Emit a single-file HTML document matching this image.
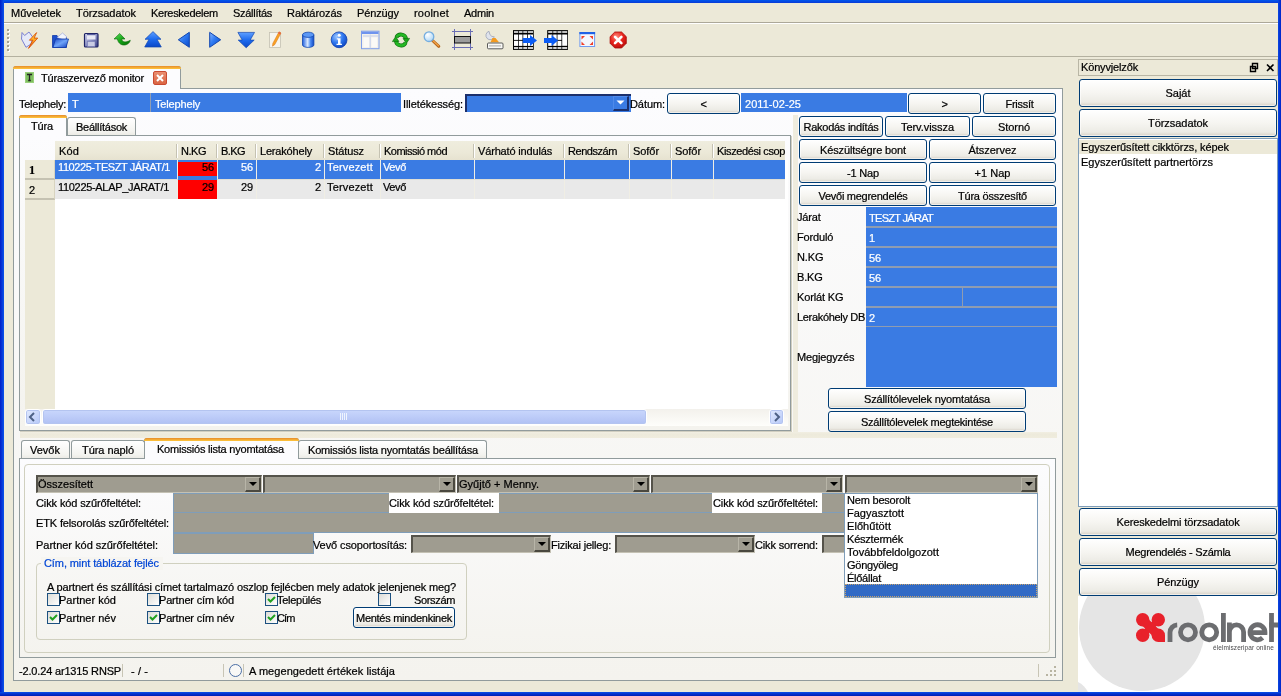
<!DOCTYPE html>
<html><head><meta charset="utf-8"><title>Turaszervezo monitor</title><style>
html,body{margin:0;padding:0}
body{width:1281px;height:696px;overflow:hidden;background:#ECE9D8;font-family:"Liberation Sans", sans-serif;font-size:11px;position:relative}
.a{position:absolute;box-sizing:border-box}
.t{position:absolute;white-space:pre;font-size:11px;line-height:13px;-webkit-text-stroke:0.22px}
.btn{position:absolute;box-sizing:border-box;border:1px solid #003C74;border-radius:3px;background:linear-gradient(#FFFFFF 0%,#F6F5F1 50%,#ECEBE5 85%,#D6D0C5 100%);box-shadow:inset 0 0 0 1px rgba(255,255,255,.6)}
.tab{position:absolute;box-sizing:border-box;border:1px solid #919B9C;border-bottom:none;border-radius:3px 3px 0 0;background:linear-gradient(#FFFFFF,#F3F3EF 80%,#ECEBE5)}
.tabsel{position:absolute;box-sizing:border-box;border:1px solid #919B9C;border-bottom:none;border-radius:3px 3px 0 0;background:#FCFCFE}
.tabsel:before{content:"";position:absolute;left:-1px;right:-1px;top:-1px;height:3px;border-radius:3px 3px 0 0;background:linear-gradient(#E68B2C,#FFC73C)}
.cmb{position:absolute;box-sizing:border-box;background:#9F9C90;border-top:2px solid #55534B;border-left:2px solid #55534B;border-bottom:1px solid #C4C1B4;border-right:1px solid #C4C1B4}
.cmb i{position:absolute;right:0;top:0;bottom:0;width:16px;box-sizing:border-box;background:#9F9C90;border-top:1px solid #B8B5A8;border-left:1px solid #B8B5A8;border-right:2px solid #4A483F;border-bottom:2px solid #4A483F}
.cmb i:after{content:"";position:absolute;left:2.500px;top:4px;border:4px solid transparent;border-top:4px solid #000;border-bottom:none}
.gf{position:absolute;box-sizing:border-box;background:#9F9C90;border:1px solid #7F9DB9}
.bf{position:absolute;box-sizing:border-box;background:#3A7BE3}
.chk{position:absolute;box-sizing:border-box;width:13px;height:13px;border:1px solid #1C5180;background:linear-gradient(135deg,#DCDCD7,#FFFFFF)}
</style></head><body>
<div class="a" style="left:4px;top:3px;width:1274px;height:19px;background:#ECE9D8"></div>
<div class="a" style="left:4px;top:22px;width:1274px;height:1px;background:#ACA899"></div>
<div class="a" style="left:4px;top:23px;width:1274px;height:1px;background:#FFFFFF"></div>
<div class="a" style="left:4px;top:24px;width:1274px;height:32px;background:#ECE9D8"></div>
<div class="a" style="left:4px;top:56px;width:1274px;height:1px;background:#B4B1A0"></div>
<div class="a" style="left:8px;top:30px;width:2px;height:2px;background:#FFFFFF"></div>
<div class="a" style="left:7px;top:29px;width:2px;height:2px;background:#A5A292"></div>
<div class="a" style="left:8px;top:34px;width:2px;height:2px;background:#FFFFFF"></div>
<div class="a" style="left:7px;top:33px;width:2px;height:2px;background:#A5A292"></div>
<div class="a" style="left:8px;top:38px;width:2px;height:2px;background:#FFFFFF"></div>
<div class="a" style="left:7px;top:37px;width:2px;height:2px;background:#A5A292"></div>
<div class="a" style="left:8px;top:42px;width:2px;height:2px;background:#FFFFFF"></div>
<div class="a" style="left:7px;top:41px;width:2px;height:2px;background:#A5A292"></div>
<div class="a" style="left:8px;top:46px;width:2px;height:2px;background:#FFFFFF"></div>
<div class="a" style="left:7px;top:45px;width:2px;height:2px;background:#A5A292"></div>
<div class="a" style="left:8px;top:50px;width:2px;height:2px;background:#FFFFFF"></div>
<div class="a" style="left:7px;top:49px;width:2px;height:2px;background:#A5A292"></div>
<svg class="a" style="left:0;top:0" width="640" height="58" viewBox="0 0 640 58"><defs>
<linearGradient id="gb" x1="0" y1="0" x2="1" y2="1"><stop offset="0" stop-color="#8DB8FF"/><stop offset=".45" stop-color="#2F7BF2"/><stop offset="1" stop-color="#0B49C8"/></linearGradient>
<linearGradient id="gbv" x1="0" y1="0" x2="0" y2="1"><stop offset="0" stop-color="#5FA0FF"/><stop offset=".5" stop-color="#1E6BEE"/><stop offset="1" stop-color="#0A47C6"/></linearGradient>
<linearGradient id="gg" x1="0" y1="0" x2="1" y2="1"><stop offset="0" stop-color="#5FE05F"/><stop offset=".5" stop-color="#16A416"/><stop offset="1" stop-color="#067006"/></linearGradient>
<linearGradient id="gl" x1="0" y1="0" x2="0" y2="1"><stop offset="0" stop-color="#FFE24A"/><stop offset=".5" stop-color="#FFA51E"/><stop offset="1" stop-color="#E8550A"/></linearGradient>
<linearGradient id="gs" x1="0" y1="0" x2="1" y2="1"><stop offset="0" stop-color="#D8DAEE"/><stop offset=".5" stop-color="#8A8FC4"/><stop offset="1" stop-color="#34387F"/></linearGradient>
<linearGradient id="gf" x1="0" y1="0" x2="1" y2="1"><stop offset="0" stop-color="#1B49C9"/><stop offset=".5" stop-color="#6FA4F8"/><stop offset="1" stop-color="#1440C0"/></linearGradient>
<radialGradient id="gi" cx=".35" cy=".3" r=".8"><stop offset="0" stop-color="#9CC6FF"/><stop offset=".5" stop-color="#2F78F0"/><stop offset="1" stop-color="#0A3FB8"/></radialGradient>
<radialGradient id="gr" cx=".4" cy=".3" r=".8"><stop offset="0" stop-color="#FF8A7A"/><stop offset=".5" stop-color="#E8231C"/><stop offset="1" stop-color="#B00A08"/></radialGradient>
<radialGradient id="gm" cx=".35" cy=".3" r=".8"><stop offset="0" stop-color="#FFFFFF"/><stop offset="1" stop-color="#A9D4F5"/></radialGradient>
<linearGradient id="gc" x1="0" y1="0" x2="1" y2="0"><stop offset="0" stop-color="#1E5FE0"/><stop offset=".45" stop-color="#D8E8FF"/><stop offset=".7" stop-color="#4D8CF2"/><stop offset="1" stop-color="#0F47C4"/></linearGradient>
</defs><path d="M22 32.500l2.600 3 4.400-3.500 4 5.500-2 6.500-5 3.300-4.500-8.300z" fill="#E6EAF8" stroke="#7C82D2" stroke-width="1"/><path d="M36.600 32.600l-7.200 7.600h3.400l-4.300 8.200 9.200-10.300h-3.600z" fill="url(#gl)" stroke="#D8520A" stroke-width=".9"/><path d="M52.500 35.500h4.500l1.500 2h8v10h-14z" fill="#1D4FCB" stroke="#123BA8" stroke-width=".8"/><path d="M57 37.500l5.500-4.500 4 3.500-1 4z" fill="#F2F5FC" stroke="#8D9BD8" stroke-width=".6"/><path d="M53 47.500l2.500-8.500h13l-2.500 8.500z" fill="url(#gf)" stroke="#123BA8" stroke-width=".8"/><rect x="84.500" y="33.500" width="13.500" height="13.500" rx="1" fill="url(#gs)" stroke="#1F2466" stroke-width="1.200"/><rect x="87" y="34.500" width="8.500" height="5" fill="#E9EAF6"/><rect x="87" y="34" width="8.500" height="1.200" fill="#5A5FA0"/><rect x="87.500" y="41.500" width="7.500" height="5" fill="#C9CBE4" stroke="#767BB4" stroke-width=".6"/><path d="M119.700 33.500l5.300 5.500h-3.300c.3 2.600 2.800 4.300 8.600 1.300-1.200 5.800-11.300 7.300-12.900-1.300H114z" fill="url(#gg)" stroke="#0A6A0A" stroke-width=".6"/><path d="M153 31.600L161 39.300H157L161.300 47H144.700L149 39.300H145z" fill="url(#gbv)" stroke="#1247B0" stroke-width=".7" stroke-linejoin="round"/><path d="M189.300 32.300v15l-11-7.500z" fill="url(#gb)" stroke="#1247B0" stroke-width="1" stroke-linejoin="round"/><path d="M209.700 32.300v15l11-7.500z" fill="url(#gb)" stroke="#1247B0" stroke-width="1" stroke-linejoin="round"/><path d="M246.200 47.800L238.200 40.100H242.200L237.900 32.400H254.500L250.200 40.100H254.200z" fill="url(#gbv)" stroke="#1247B0" stroke-width=".7" stroke-linejoin="round"/><rect x="269.500" y="32.500" width="11" height="15" fill="#F6F5F0" stroke="#C4C1B2" stroke-width=".8"/><path d="M279 31.800l2 1.200-6.200 11.600-2.300 1.600.3-2.800z" fill="#F8A125" stroke="#D9720E" stroke-width=".5"/><path d="M279 31.800l2 1.200-.8 1.500-2-1.200z" fill="#E8604A"/><path d="M302.500 35v10a5.700 2.400 0 0 0 11.400 0V35z" fill="url(#gc)" stroke="#1247B0" stroke-width=".8"/><ellipse cx="308.200" cy="34.800" rx="5.700" ry="2.600" fill="#5C98F5" stroke="#1247B0" stroke-width=".8"/><circle cx="339.100" cy="39.800" r="7.900" fill="url(#gi)" stroke="#0E3EAE" stroke-width=".8"/><circle cx="339.200" cy="35.300" r="1.500" fill="#fff"/><path d="M336.800 38.200h3.700v5.600h1.400v1.300h-5.400v-1.300h1.500v-4.300h-1.200z" fill="#fff"/><rect x="361.500" y="31.200" width="17.500" height="17.500" fill="#F3F1EC" stroke="#7F9EEA" stroke-width="1"/><rect x="362" y="31.700" width="16.500" height="2.300" fill="#6F94EE"/><path d="M370.200 34.500v14M363 36h6.500M371 36h7" stroke="#B8C8EE" stroke-width=".8"/><rect x="363.500" y="37.500" width="5.500" height="9.500" fill="#FBFAF7"/><rect x="371.500" y="37.500" width="5.500" height="9.500" fill="#FBFAF7"/><path d="M396.300 37.400A5.200 5.200 0 0 1 406.100 39" stroke="#0A6A0A" stroke-width="3.800" fill="none"/><path d="M396.300 37.400A5.200 5.200 0 0 1 406.100 39" stroke="#25B825" stroke-width="2.600" fill="none"/><path d="M403 38.400h6.600l-3.200 5z" fill="#1BA81B" stroke="#0A6A0A" stroke-width=".6"/><path d="M405.700 42.600A5.200 5.200 0 0 1 395.900 41" stroke="#0A6A0A" stroke-width="3.800" fill="none"/><path d="M405.700 42.600A5.200 5.200 0 0 1 395.900 41" stroke="#25B825" stroke-width="2.600" fill="none"/><path d="M399 41.600h-6.600l3.200-5z" fill="#1BA81B" stroke="#0A6A0A" stroke-width=".6"/><path d="M432.500 40.500l6.300 5.800" stroke="#B8651A" stroke-width="3" stroke-linecap="round"/><path d="M433 40.800l5.500 5" stroke="#F2A64A" stroke-width="1.200" stroke-linecap="round"/><circle cx="429" cy="36.700" r="4.800" fill="url(#gm)" stroke="#74ADE0" stroke-width="1.300"/><path d="M454.500 29v21M470.500 29v21M452 31.500h21M452 47.500h21" stroke="#6A6EB4" stroke-width="1"/><rect x="454.500" y="36.500" width="16" height="6.500" fill="#9C9C9C" stroke="#111" stroke-width="1"/><path d="M489 31.300a4.300 4.300 0 1 0 5.300 5.500l-2.700-.4-1.800-2.200z" fill="#DFE3EC" stroke="#9AA2B8" stroke-width=".8"/><path d="M492.500 38l3-0l3.500 4.200h-8.500z" fill="#F49A1E"/><rect x="487.500" y="43" width="15.500" height="5.800" rx="1" fill="#F8F8F5" stroke="#4A4A4A" stroke-width=".9"/><path d="M489.500 45.900h11.500" stroke="#777" stroke-width="1.200" stroke-dasharray="1 1"/><rect x="513" y="30.100" width="20.750" height="19.800" fill="#000"/><rect x="514.00" y="31.25" width="4.25" height="1.5" fill="#fff"/><rect x="514.00" y="34.50" width="4.25" height="5.4" fill="#fff"/><rect x="514.00" y="40.80" width="4.25" height="5.1" fill="#fff"/><rect x="514.00" y="47.20" width="4.25" height="1.6" fill="#fff"/><rect x="519.00" y="31.25" width="3.5" height="1.5" fill="#fff"/><rect x="519.00" y="34.50" width="3.5" height="5.4" fill="#fff"/><rect x="519.00" y="40.80" width="3.5" height="5.1" fill="#fff"/><rect x="519.00" y="47.20" width="3.5" height="1.6" fill="#fff"/><rect x="523.25" y="31.25" width="4" height="1.5" fill="#fff"/><rect x="523.25" y="34.50" width="4" height="5.4" fill="#fff"/><rect x="523.25" y="40.80" width="4" height="5.1" fill="#fff"/><rect x="523.25" y="47.20" width="4" height="1.6" fill="#fff"/><rect x="528.00" y="31.25" width="5" height="1.5" fill="#fff"/><rect x="528.00" y="34.50" width="5" height="5.4" fill="#fff"/><rect x="528.00" y="40.80" width="5" height="5.1" fill="#fff"/><rect x="528.00" y="47.20" width="5" height="1.6" fill="#fff"/><path d="M522.750 38.100h7.250v-3.100l7 5.500-7 5.500v-3.100h-7.250z" fill="#0B5CF5"/><rect x="547.2" y="30.100" width="20.750" height="19.800" fill="#000"/><rect x="548.20" y="31.25" width="4.25" height="1.5" fill="#fff"/><rect x="548.20" y="34.50" width="4.25" height="5.4" fill="#fff"/><rect x="548.20" y="40.80" width="4.25" height="5.1" fill="#fff"/><rect x="548.20" y="47.20" width="4.25" height="1.6" fill="#fff"/><rect x="553.20" y="31.25" width="3.5" height="1.5" fill="#fff"/><rect x="553.20" y="34.50" width="3.5" height="5.4" fill="#fff"/><rect x="553.20" y="40.80" width="3.5" height="5.1" fill="#fff"/><rect x="553.20" y="47.20" width="3.5" height="1.6" fill="#fff"/><rect x="557.45" y="31.25" width="4" height="1.5" fill="#fff"/><rect x="557.45" y="34.50" width="4" height="5.4" fill="#fff"/><rect x="557.45" y="40.80" width="4" height="5.1" fill="#fff"/><rect x="557.45" y="47.20" width="4" height="1.6" fill="#fff"/><rect x="562.20" y="31.25" width="5" height="1.5" fill="#fff"/><rect x="562.20" y="47.20" width="5" height="1.6" fill="#fff"/><rect x="562.20" y="34.500" width="5" height="11.300" fill="#fff"/><path d="M544 38.100h7.500v-3.100l6.600 5.500-6.600 5.500v-3.100H544z" fill="#0B5CF5"/><rect x="579.900" y="32.500" width="14.700" height="14" fill="#F4F7FD" stroke="#6F9AF0" stroke-width="1"/><rect x="579.400" y="32" width="15.700" height="2.200" fill="#1F62E6"/><path d="M581.500 36h3.500l-3.500 3.500zM593 36h-3.500l3.500 3.500zM581.500 45h3.500l-3.500-3.500zM593 45h-3.500l3.500-3.500z" fill="#F0402A"/><path d="M614.800 32h6.800l4.700 4.700v6.600l-4.700 4.700h-6.800l-4.700-4.700v-6.600z" fill="url(#gr)" stroke="#A80D0A" stroke-width=".8"/><path d="M615 36.800l6.400 6.400M621.400 36.800l-6.400 6.400" stroke="#fff" stroke-width="2.600" stroke-linecap="round"/></svg>
<div class="a" style="left:13px;top:88px;width:1050px;height:593px;border:1px solid #919B9C;background:linear-gradient(#FCFCFE,#F4F3EE)"></div>
<div class="tabsel" style="left:13px;top:66px;width:168px;height:23px"></div>
<div class="a" style="left:25px;top:72px;width:9px;height:11px;background:#7FC060;border:1px solid #9AD07C"><svg width="9" height="11" style="position:absolute;left:-1px;top:-1px"><path d="M2 2.5h5M4.5 2.5v6M3.2 8.5h2.6" stroke="#222" stroke-width="1.3" fill="none"/></svg></div>
<div class="a" style="left:153px;top:71px;width:14px;height:14px;background:linear-gradient(#EA8E70,#DA6543);border:1px solid #C94A30;border-radius:2px"><svg width="12" height="12" style="position:absolute;left:0;top:0"><path d="M3 3l6 6M9 3l-6 6" stroke="#fff" stroke-width="2"/></svg></div>
<div class="a" style="left:68px;top:93px;width:82px;height:19px;background:#3A7BE3"></div>
<div class="a" style="left:151px;top:93px;width:250px;height:19px;background:#3A7BE3"></div>
<div class="a" style="left:150px;top:93px;width:1px;height:19px;background:#8D9DB5"></div>
<div class="a" style="left:465px;top:94px;width:166px;height:18px;background:#3A7BE3;border-top:2px solid #1B2F6B;border-left:2px solid #1B2F6B"></div>
<div class="a" style="left:613px;top:96px;width:16px;height:15px;background:#3A7BE3;border-right:2px solid #1B2F6B;border-bottom:2px solid #1B2F6B;border-top:1px solid #4F8AEA;border-left:1px solid #4F8AEA"><svg width="13" height="12" style="position:absolute;left:0;top:0"><path d="M2.500 3.500h8l-4 4z" fill="#fff"/></svg></div>
<div class="btn" style="left:667px;top:93px;width:73px;height:21px"></div>
<div class="a" style="left:741px;top:93px;width:166px;height:19px;background:#3A7BE3"></div>
<div class="btn" style="left:908px;top:93px;width:73px;height:21px"></div>
<div class="btn" style="left:983px;top:93px;width:73px;height:21px"></div>
<div class="a" style="left:793px;top:115px;width:5px;height:318px;background:#EFECDE"></div>
<div class="a" style="left:20px;top:432px;width:1037px;height:6px;background:linear-gradient(#F1EEE2,#EDEADB 40%,#EFECDE)"></div>
<div class="btn" style="left:799px;top:116px;width:84px;height:21px"></div>
<div class="btn" style="left:885px;top:116px;width:85px;height:21px"></div>
<div class="btn" style="left:972px;top:116px;width:84px;height:21px"></div>
<div class="btn" style="left:799px;top:139px;width:128px;height:21px"></div>
<div class="btn" style="left:929px;top:139px;width:127px;height:21px"></div>
<div class="btn" style="left:799px;top:162px;width:128px;height:21px"></div>
<div class="btn" style="left:929px;top:162px;width:127px;height:21px"></div>
<div class="btn" style="left:799px;top:185px;width:128px;height:21px"></div>
<div class="btn" style="left:929px;top:185px;width:127px;height:21px"></div>
<div class="a" style="left:866px;top:207px;width:191px;height:180px;background:#3A7BE3"></div>
<div class="a" style="left:866px;top:226px;width:191px;height:1px;background:#8F9CB0"></div>
<div class="a" style="left:866px;top:227px;width:191px;height:1px;background:#8F9CB0"></div>
<div class="a" style="left:866px;top:246px;width:191px;height:1px;background:#8F9CB0"></div>
<div class="a" style="left:866px;top:247px;width:191px;height:1px;background:#8F9CB0"></div>
<div class="a" style="left:866px;top:266px;width:191px;height:1px;background:#8F9CB0"></div>
<div class="a" style="left:866px;top:267px;width:191px;height:1px;background:#8F9CB0"></div>
<div class="a" style="left:866px;top:286px;width:191px;height:1px;background:#8F9CB0"></div>
<div class="a" style="left:866px;top:287px;width:191px;height:1px;background:#8F9CB0"></div>
<div class="a" style="left:866px;top:306px;width:191px;height:1px;background:#8F9CB0"></div>
<div class="a" style="left:866px;top:307px;width:191px;height:1px;background:#8F9CB0"></div>
<div class="a" style="left:866px;top:326px;width:191px;height:1px;background:#8F9CB0"></div>
<div class="a" style="left:962px;top:288px;width:1px;height:19px;background:#8F9CB0"></div>
<div class="btn" style="left:828px;top:388px;width:198px;height:21px"></div>
<div class="btn" style="left:828px;top:411px;width:198px;height:21px"></div>
<div class="a" style="left:19px;top:135px;width:772px;height:296px;border:1px solid #919B9C;background:linear-gradient(#FCFCFE,#F4F3EE);box-shadow:1px 1px 0 #D0CEC0"></div>
<div class="tabsel" style="left:19px;top:115px;width:48px;height:21px"></div>
<div class="tab" style="left:67px;top:117px;width:69px;height:18px"></div>
<div class="a" style="left:25px;top:160px;width:763px;height:249px;background:#fff"></div>
<div class="a" style="left:25px;top:160px;width:30px;height:249px;background:#ECE9D8"></div>
<div class="a" style="left:55px;top:141px;width:730px;height:19px;background:linear-gradient(#EFEDDE,#ECE9D8 60%,#E6E2D0)"></div>
<div class="a" style="left:176px;top:144px;width:1px;height:14px;background:#C5C2B2"></div>
<div class="a" style="left:177px;top:144px;width:1px;height:14px;background:#FFFFFF"></div>
<div class="a" style="left:216px;top:144px;width:1px;height:14px;background:#C5C2B2"></div>
<div class="a" style="left:217px;top:144px;width:1px;height:14px;background:#FFFFFF"></div>
<div class="a" style="left:255px;top:144px;width:1px;height:14px;background:#C5C2B2"></div>
<div class="a" style="left:256px;top:144px;width:1px;height:14px;background:#FFFFFF"></div>
<div class="a" style="left:323px;top:144px;width:1px;height:14px;background:#C5C2B2"></div>
<div class="a" style="left:324px;top:144px;width:1px;height:14px;background:#FFFFFF"></div>
<div class="a" style="left:379px;top:144px;width:1px;height:14px;background:#C5C2B2"></div>
<div class="a" style="left:380px;top:144px;width:1px;height:14px;background:#FFFFFF"></div>
<div class="a" style="left:473px;top:144px;width:1px;height:14px;background:#C5C2B2"></div>
<div class="a" style="left:474px;top:144px;width:1px;height:14px;background:#FFFFFF"></div>
<div class="a" style="left:563px;top:144px;width:1px;height:14px;background:#C5C2B2"></div>
<div class="a" style="left:564px;top:144px;width:1px;height:14px;background:#FFFFFF"></div>
<div class="a" style="left:628px;top:144px;width:1px;height:14px;background:#C5C2B2"></div>
<div class="a" style="left:629px;top:144px;width:1px;height:14px;background:#FFFFFF"></div>
<div class="a" style="left:670px;top:144px;width:1px;height:14px;background:#C5C2B2"></div>
<div class="a" style="left:671px;top:144px;width:1px;height:14px;background:#FFFFFF"></div>
<div class="a" style="left:712px;top:144px;width:1px;height:14px;background:#C5C2B2"></div>
<div class="a" style="left:713px;top:144px;width:1px;height:14px;background:#FFFFFF"></div>
<div class="a" style="left:55px;top:160px;width:730px;height:20px;background:#3A7BE3"></div>
<div class="a" style="left:55px;top:180px;width:730px;height:19px;background:#E9E9E9"></div>
<div class="a" style="left:177px;top:160px;width:1px;height:39px;background:#F0EEE4"></div>
<div class="a" style="left:217px;top:160px;width:1px;height:39px;background:#F0EEE4"></div>
<div class="a" style="left:256px;top:160px;width:1px;height:39px;background:#F0EEE4"></div>
<div class="a" style="left:324px;top:160px;width:1px;height:39px;background:#F0EEE4"></div>
<div class="a" style="left:380px;top:160px;width:1px;height:39px;background:#F0EEE4"></div>
<div class="a" style="left:474px;top:160px;width:1px;height:39px;background:#F0EEE4"></div>
<div class="a" style="left:564px;top:160px;width:1px;height:39px;background:#F0EEE4"></div>
<div class="a" style="left:629px;top:160px;width:1px;height:39px;background:#F0EEE4"></div>
<div class="a" style="left:671px;top:160px;width:1px;height:39px;background:#F0EEE4"></div>
<div class="a" style="left:713px;top:160px;width:1px;height:39px;background:#F0EEE4"></div>
<div class="a" style="left:55px;top:179px;width:730px;height:1px;background:#E0DFD6"></div>
<div class="a" style="left:178px;top:160px;width:39px;height:20px;background:#FF0000"></div>
<div class="a" style="left:178px;top:180px;width:39px;height:19px;background:#FF0000"></div>
<div class="a" style="left:178px;top:160px;width:39px;height:2px;background:#3A7BE3"></div>
<div class="a" style="left:178px;top:176px;width:39px;height:4px;background:#3A7BE3"></div>
<div class="a" style="left:25px;top:160px;width:30px;height:20px;background:#ECE9D8;border-bottom:2px solid #C5C2B2;border-right:1px solid #D8D4C0"></div>
<div class="a" style="left:25px;top:180px;width:30px;height:20px;background:#ECE9D8;border-bottom:2px solid #C5C2B2;border-right:1px solid #D8D4C0"></div>
<div class="a" style="left:25px;top:409px;width:763px;height:17px;background:linear-gradient(#F3F1EC,#FEFEFB)"></div>
<div class="a" style="left:25px;top:409px;width:16px;height:16px;background:linear-gradient(135deg,#E1EAFE,#B6C8F8);border:1px solid #fff;border-radius:3px;box-shadow:0 0 0 1px #B4C4F0 inset"><svg width="13" height="14" style="position:absolute;left:0;top:0"><path d="M8 3L4 7l4 4" stroke="#4D6185" stroke-width="2" fill="none"/></svg></div>
<div class="a" style="left:769px;top:409px;width:15px;height:16px;background:linear-gradient(135deg,#E1EAFE,#B6C8F8);border:1px solid #fff;border-radius:3px;box-shadow:0 0 0 1px #B4C4F0 inset"><svg width="13" height="14" style="position:absolute;left:0;top:0"><path d="M5 3l4 4-4 4" stroke="#4D6185" stroke-width="2" fill="none"/></svg></div>
<div class="a" style="left:42px;top:409px;width:605px;height:16px;background:linear-gradient(#C9D7FC,#BAC9F7 60%,#B0C1F3);border:1px solid #fff;border-radius:3px;box-shadow:0 0 0 1px #B4C4F0 inset"></div>
<div class="a" style="left:340px;top:413px;width:1px;height:7px;background:#EEF4FE"></div>
<div class="a" style="left:342px;top:413px;width:1px;height:7px;background:#EEF4FE"></div>
<div class="a" style="left:344px;top:413px;width:1px;height:7px;background:#EEF4FE"></div>
<div class="a" style="left:346px;top:413px;width:1px;height:7px;background:#EEF4FE"></div>
<div class="a" style="left:19px;top:458px;width:1037px;height:200px;border:1px solid #919B9C;background:linear-gradient(#FCFCFE,#F4F3EE)"></div>
<div class="tab" style="left:21px;top:440px;width:49px;height:18px"></div>
<div class="tab" style="left:71px;top:440px;width:74px;height:18px"></div>
<div class="tab" style="left:298px;top:440px;width:189px;height:18px"></div>
<div class="tabsel" style="left:144px;top:438px;width:155px;height:21px"></div>
<div class="a" style="left:24px;top:464px;width:1026px;height:189px;border:1px solid #D0D0BF;border-radius:4px"></div>
<div class="cmb" style="left:36px;top:475px;width:226px;height:18px"><i></i></div>
<div class="cmb" style="left:263px;top:475px;width:193px;height:18px"><i></i></div>
<div class="cmb" style="left:457px;top:475px;width:193px;height:18px"><i></i></div>
<div class="cmb" style="left:651px;top:475px;width:192px;height:18px"><i></i></div>
<div class="cmb" style="left:845px;top:475px;width:193px;height:18px"><i></i></div>
<div class="gf" style="left:173px;top:493px;width:865px;height:20px"></div>
<div class="gf" style="left:173px;top:512px;width:865px;height:21px"></div>
<div class="gf" style="left:173px;top:533px;width:141px;height:21px"></div>
<div class="a" style="left:389px;top:493px;width:110px;height:20px;background:#fff"></div>
<div class="a" style="left:712px;top:493px;width:110px;height:20px;background:#fff"></div>
<div class="cmb" style="left:411px;top:535px;width:140px;height:18px"><i></i></div>
<div class="cmb" style="left:615px;top:535px;width:140px;height:18px"><i></i></div>
<div class="cmb" style="left:822px;top:535px;width:140px;height:18px"><i></i></div>
<div class="a" style="left:844px;top:493px;width:194px;height:105px;background:#fff;border:1px solid #7F9DB9"></div>
<div class="a" style="left:845px;top:584px;width:192px;height:13px;background:#316AC5;outline:1px dotted #C9A36B;outline-offset:-1px"></div>
<div class="a" style="left:36px;top:563px;width:431px;height:77px;border:1px solid #D0D0BF;border-radius:4px"></div>
<div class="a" style="left:41px;top:557px;width:122px;height:13px;background:#F6F5F1"></div>
<div class="chk" style="left:47px;top:593px"></div>
<div class="chk" style="left:147px;top:593px"></div>
<div class="chk" style="left:265px;top:593px"><svg width="11" height="11" style="position:absolute;left:0;top:0"><path d="M2 5l2.5 2.5L9 3" stroke="#21A121" stroke-width="2" fill="none"/></svg></div>
<div class="chk" style="left:378px;top:593px"></div>
<div class="chk" style="left:47px;top:611px"><svg width="11" height="11" style="position:absolute;left:0;top:0"><path d="M2 5l2.5 2.5L9 3" stroke="#21A121" stroke-width="2" fill="none"/></svg></div>
<div class="chk" style="left:147px;top:611px"><svg width="11" height="11" style="position:absolute;left:0;top:0"><path d="M2 5l2.5 2.5L9 3" stroke="#21A121" stroke-width="2" fill="none"/></svg></div>
<div class="chk" style="left:265px;top:611px"><svg width="11" height="11" style="position:absolute;left:0;top:0"><path d="M2 5l2.5 2.5L9 3" stroke="#21A121" stroke-width="2" fill="none"/></svg></div>
<div class="btn" style="left:353px;top:607px;width:102px;height:21px"></div>
<div class="a" style="left:122px;top:664px;width:1px;height:13px;background:#C8C5B5"></div>
<div class="a" style="left:223px;top:664px;width:1px;height:13px;background:#C8C5B5"></div>
<div class="a" style="left:243px;top:664px;width:1px;height:13px;background:#C8C5B5"></div>
<div class="a" style="left:229px;top:664px;width:13px;height:13px;border:1.5px solid #4A6EA5;border-radius:50%;background:#F8F8F6"></div>
<div class="a" style="left:1038px;top:664px;width:1px;height:13px;background:#C8C5B5"></div>
<div class="a" style="left:1054px;top:666px;width:2px;height:2px;background:#B8B4A2"></div>
<div class="a" style="left:1050px;top:670px;width:2px;height:2px;background:#B8B4A2"></div>
<div class="a" style="left:1054px;top:670px;width:2px;height:2px;background:#B8B4A2"></div>
<div class="a" style="left:1046px;top:674px;width:2px;height:2px;background:#B8B4A2"></div>
<div class="a" style="left:1050px;top:674px;width:2px;height:2px;background:#B8B4A2"></div>
<div class="a" style="left:1054px;top:674px;width:2px;height:2px;background:#B8B4A2"></div>
<div class="a" style="left:1078px;top:59px;width:200px;height:17px;background:#ECE9D8;border:1px solid #B9B6A5"></div>
<svg class="a" style="left:1249px;top:62px" width="28" height="11"><path d="M3.5 1.5h5v5h-5zM1.5 4.5h5v5h-5z" stroke="#000" stroke-width="1.400" fill="#ECE9D8"/><path d="M18 2.500l6.500 6.500M24.500 2.500l-6.500 6.500" stroke="#000" stroke-width="1.600"/></svg>
<div class="btn" style="left:1079px;top:79px;width:198px;height:28px"></div>
<div class="btn" style="left:1079px;top:109px;width:198px;height:28px"></div>
<div class="a" style="left:1078px;top:138px;width:200px;height:369px;background:#fff;border:1px solid #7F9DB9"></div>
<div class="a" style="left:1079px;top:140px;width:198px;height:14px;background:#ECE9D8"></div>
<div class="btn" style="left:1079px;top:508px;width:198px;height:28px"></div>
<div class="btn" style="left:1079px;top:538px;width:198px;height:28px"></div>
<div class="btn" style="left:1079px;top:568px;width:198px;height:28px"></div>
<div class="a" style="left:1078px;top:596px;width:200px;height:96px;background:#fff;overflow:hidden"><div class="a" style="left:1px;top:-31px;width:126px;height:126px;border-radius:50%;background:#E5E5E5"></div><div class="a" style="left:-30px;top:84px;width:42px;height:42px;border-radius:50%;background:#E5E5E5"></div></div>
<svg class="a" style="left:1130px;top:608px" width="148" height="46" viewBox="0 0 148 46"><g fill="#E8212B"><circle cx="12.700" cy="11.700" r="6.700"/><circle cx="28.300" cy="11.700" r="6.700"/><circle cx="12.700" cy="27.200" r="6.700"/><circle cx="28.300" cy="27.200" r="6.700"/><rect x="28" y="27" width="7" height="7"/><path d="M12.700 11.700L28.300 27.200" stroke="#E8212B" stroke-width="9"/><path d="M28.300 11.700L12.700 27.200" stroke="#E8212B" stroke-width="6"/></g><g fill="none" stroke="#6C6D70" stroke-width="4.800"><path d="M40 34V24.500a7.600 7.600 0 0 1 7.200-7.600"/><circle cx="58" cy="24.300" r="7.500"/><circle cx="79.200" cy="24.300" r="7.500"/><path d="M93.400 5v29"/><path d="M99.400 34V14.500M99.400 24a7.100 7.100 0 0 1 14.200 0v10"/><path d="M120.500 24.700h14.500A7.500 7.500 0 1 0 132.600 29.800"/><path d="M141.500 5v29M139 17h9"/></g></svg>
<div class="a" style="left:0px;top:0px;width:1281px;height:3px;background:linear-gradient(#0058EE,#0A3AD6)"></div>
<div class="a" style="left:0px;top:0px;width:4px;height:696px;background:linear-gradient(90deg,#001EC8,#0638D8 50%,#0A55EC)"></div>
<div class="a" style="left:1278px;top:0px;width:3px;height:696px;background:linear-gradient(90deg,#0A48E2,#0024C8)"></div>
<div class="a" style="left:0px;top:692px;width:1281px;height:4px;background:linear-gradient(#0A50E8,#0530CC 50%,#001EB4)"></div>
<div id="txt" style="position:absolute;left:0;top:0;width:1281px;height:696px;will-change:transform">
<span class="t" style="left:11.00px;top:7px;color:#000;letter-spacing:-0.016px;">Műveletek</span>
<span class="t" style="left:76.00px;top:7px;color:#000;letter-spacing:-0.048px;">Törzsadatok</span>
<span class="t" style="left:151.00px;top:7px;color:#000;letter-spacing:-0.277px;">Kereskedelem</span>
<span class="t" style="left:233.00px;top:7px;color:#000;letter-spacing:-0.286px;">Szállítás</span>
<span class="t" style="left:287.00px;top:7px;color:#000;letter-spacing:-0.064px;">Raktározás</span>
<span class="t" style="left:357.00px;top:7px;color:#000;letter-spacing:-0.116px;">Pénzügy</span>
<span class="t" style="left:414.00px;top:7px;color:#000;letter-spacing:0.194px;">roolnet</span>
<span class="t" style="left:464.00px;top:7px;color:#000;letter-spacing:-0.237px;">Admin</span>
<span class="t" style="left:41.00px;top:72px;color:#000;letter-spacing:-0.169px;">Túraszervező monitor</span>
<span class="t" style="left:19.00px;top:98px;color:#000;letter-spacing:-0.255px;">Telephely:</span>
<span class="t" style="left:72.00px;top:98px;color:#fff;letter-spacing:-0.140px;">T</span>
<span class="t" style="left:155.00px;top:98px;color:#fff;letter-spacing:-0.165px;">Telephely</span>
<span class="t" style="left:403.00px;top:98px;color:#000;letter-spacing:-0.089px;">Illetékesség:</span>
<span class="t" style="left:630.00px;top:98px;color:#000;letter-spacing:-0.078px;">Dátum:</span>
<span class="t" style="left:745.00px;top:98px;color:#fff;letter-spacing:0.055px;">2011-02-25</span>
<span class="t" style="left:797.00px;top:211px;color:#000;letter-spacing:-0.140px;">Járat</span>
<span class="t" style="left:869.00px;top:212px;color:#fff;letter-spacing:-0.702px;">TESZT JÁRAT</span>
<span class="t" style="left:797.00px;top:231px;color:#000;letter-spacing:-0.140px;">Forduló</span>
<span class="t" style="left:869.00px;top:232px;color:#fff;letter-spacing:-0.140px;">1</span>
<span class="t" style="left:797.00px;top:251px;color:#000;letter-spacing:-0.140px;">N.KG</span>
<span class="t" style="left:869.00px;top:252px;color:#fff;letter-spacing:-0.140px;">56</span>
<span class="t" style="left:797.00px;top:271px;color:#000;letter-spacing:-0.140px;">B.KG</span>
<span class="t" style="left:869.00px;top:272px;color:#fff;letter-spacing:-0.140px;">56</span>
<span class="t" style="left:797.00px;top:291px;color:#000;letter-spacing:-0.140px;">Korlát KG</span>
<span class="t" style="left:797.00px;top:311px;color:#000;letter-spacing:-0.320px;">Lerakóhely DB</span>
<span class="t" style="left:869.00px;top:312px;color:#fff;letter-spacing:-0.140px;">2</span>
<span class="t" style="left:797.00px;top:351px;color:#000;letter-spacing:-0.140px;">Megjegyzés</span>
<span class="t" style="left:31.00px;top:120px;color:#000;letter-spacing:-0.156px;">Túra</span>
<span class="t" style="left:76.00px;top:121px;color:#000;letter-spacing:-0.256px;">Beállítások</span>
<span class="t" style="left:59.00px;top:145px;color:#000;letter-spacing:0.141px;">Kód</span>
<span class="t" style="left:181.00px;top:145px;color:#000;letter-spacing:-0.477px;">N.KG</span>
<span class="t" style="left:221.00px;top:145px;color:#000;letter-spacing:-0.574px;">B.KG</span>
<span class="t" style="left:260.00px;top:145px;color:#000;letter-spacing:-0.183px;">Lerakóhely</span>
<span class="t" style="left:328.00px;top:145px;color:#000;letter-spacing:-0.098px;">Státusz</span>
<span class="t" style="left:384.00px;top:145px;color:#000;letter-spacing:-0.507px;">Komissió mód</span>
<span class="t" style="left:478.00px;top:145px;color:#000;letter-spacing:-0.164px;">Várható indulás</span>
<span class="t" style="left:568.00px;top:145px;color:#000;letter-spacing:-0.447px;">Rendszám</span>
<span class="t" style="left:633.00px;top:145px;color:#000;letter-spacing:-0.059px;">Sofőr</span>
<span class="t" style="left:675.00px;top:145px;color:#000;letter-spacing:-0.059px;">Sofőr</span>
<span class="t" style="left:717.00px;top:145px;color:#000;letter-spacing:-0.384px;">Kiszedési csop</span>
<span class="t" style="left:29.00px;top:164px;color:#000;letter-spacing:-0.140px;font-family:'Liberation Serif',serif;font-weight:bold;font-size:12px">1</span>
<span class="t" style="left:29.00px;top:184px;color:#000;letter-spacing:-0.140px;">2</span>
<span class="t" style="left:58.00px;top:161px;color:#fff;letter-spacing:-0.422px;">110225-TESZT JÁRAT/1</span>
<span class="t" style="left:202.00px;top:161px;color:#000;letter-spacing:-0.125px;">56</span>
<span class="t" style="left:241.00px;top:161px;color:#fff;letter-spacing:-0.125px;">56</span>
<span class="t" style="left:315.00px;top:161px;color:#fff;letter-spacing:-0.125px;">2</span>
<span class="t" style="left:327.00px;top:161px;color:#fff;letter-spacing:0.151px;">Tervezett</span>
<span class="t" style="left:383.00px;top:161px;color:#fff;letter-spacing:-0.367px;">Vevő</span>
<span class="t" style="left:58.00px;top:181px;color:#000;letter-spacing:-0.316px;">110225-ALAP_JARAT/1</span>
<span class="t" style="left:202.00px;top:181px;color:#000;letter-spacing:-0.125px;">29</span>
<span class="t" style="left:241.00px;top:181px;color:#000;letter-spacing:-0.125px;">29</span>
<span class="t" style="left:315.00px;top:181px;color:#000;letter-spacing:-0.125px;">2</span>
<span class="t" style="left:327.00px;top:181px;color:#000;letter-spacing:0.151px;">Tervezett</span>
<span class="t" style="left:383.00px;top:181px;color:#000;letter-spacing:-0.367px;">Vevő</span>
<span class="t" style="left:30.00px;top:444px;color:#000;letter-spacing:0.006px;">Vevők</span>
<span class="t" style="left:82.00px;top:444px;color:#000;letter-spacing:-0.059px;">Túra napló</span>
<span class="t" style="left:157.00px;top:443px;color:#000;letter-spacing:-0.218px;">Komissiós lista nyomtatása</span>
<span class="t" style="left:308.00px;top:444px;color:#000;letter-spacing:-0.186px;">Komissiós lista nyomtatás beállítása</span>
<span class="t" style="left:38.00px;top:478px;color:#000;letter-spacing:-0.003px;">Összesített</span>
<span class="t" style="left:459.00px;top:478px;color:#000;letter-spacing:0.027px;">Gyűjtő + Menny.</span>
<span class="t" style="left:36.00px;top:497px;color:#000;letter-spacing:-0.113px;">Cikk kód szűrőfeltétel:</span>
<span class="t" style="left:389.00px;top:497px;color:#000;letter-spacing:-0.113px;">Cikk kód szűrőfeltétel:</span>
<span class="t" style="left:713.00px;top:497px;color:#000;letter-spacing:-0.113px;">Cikk kód szűrőfeltétel:</span>
<span class="t" style="left:36.00px;top:517px;color:#000;letter-spacing:-0.136px;">ETK felsorolás szűrőfeltétel:</span>
<span class="t" style="left:36.00px;top:539px;color:#000;letter-spacing:-0.011px;">Partner kód szűrőfeltétel:</span>
<span class="t" style="left:313.00px;top:539px;color:#000;letter-spacing:-0.105px;">Vevő csoportosítás:</span>
<span class="t" style="left:551.00px;top:539px;color:#000;letter-spacing:-0.198px;">Fizikai jelleg:</span>
<span class="t" style="left:755.00px;top:539px;color:#000;letter-spacing:-0.138px;">Cikk sorrend:</span>
<span class="t" style="left:847.00px;top:494px;color:#000;letter-spacing:-0.202px;">Nem besorolt</span>
<span class="t" style="left:847.00px;top:507px;color:#000;letter-spacing:0.013px;">Fagyasztott</span>
<span class="t" style="left:847.00px;top:520px;color:#000;letter-spacing:0.064px;">Előhűtött</span>
<span class="t" style="left:847.00px;top:533px;color:#000;letter-spacing:-0.208px;">Késztermék</span>
<span class="t" style="left:847.00px;top:546px;color:#000;letter-spacing:0.015px;">Továbbfeldolgozott</span>
<span class="t" style="left:847.00px;top:559px;color:#000;letter-spacing:-0.247px;">Göngyöleg</span>
<span class="t" style="left:847.00px;top:572px;color:#000;letter-spacing:-0.260px;">Élőállat</span>
<span class="t" style="left:44.00px;top:557px;color:#0046D5;letter-spacing:-0.095px;">Cím, mint táblázat fejléc</span>
<span class="t" style="left:47.00px;top:581px;color:#000;letter-spacing:-0.121px;">A partnert és szállítási címet tartalmazó oszlop fejlécben mely adatok jelenjenek meg?</span>
<span class="t" style="left:59.00px;top:594px;color:#000;letter-spacing:0.011px;">Partner kód</span>
<span class="t" style="left:159.00px;top:594px;color:#000;letter-spacing:-0.176px;">Partner cím kód</span>
<span class="t" style="left:277.00px;top:594px;color:#000;letter-spacing:-0.276px;">Település</span>
<span class="t" style="left:414.00px;top:594px;color:#000;letter-spacing:-0.344px;">Sorszám</span>
<span class="t" style="left:59.00px;top:612px;color:#000;letter-spacing:0.011px;">Partner név</span>
<span class="t" style="left:159.00px;top:612px;color:#000;letter-spacing:-0.176px;">Partner cím név</span>
<span class="t" style="left:277.00px;top:612px;color:#000;letter-spacing:-0.900px;">Cím</span>
<span class="t" style="left:19.00px;top:665px;color:#000;letter-spacing:-0.167px;">-2.0.24 ar1315 RNSP</span>
<span class="t" style="left:131.00px;top:665px;color:#000;letter-spacing:0.100px;">- / -</span>
<span class="t" style="left:249.00px;top:665px;color:#000;letter-spacing:0.058px;">A megengedett értékek listája</span>
<span class="t" style="left:1081.00px;top:61px;color:#000;letter-spacing:-0.155px;">Könyvjelzők</span>
<span class="t" style="left:1081.00px;top:141px;color:#000;letter-spacing:-0.097px;">Egyszerűsített cikktörzs, képek</span>
<span class="t" style="left:1081.00px;top:156px;color:#000;letter-spacing:0.020px;">Egyszerűsített partnertörzs</span>
<span class="t" style="left:1213.00px;top:644px;color:#4A4A4C;letter-spacing:0.083px;font-size:6.500px;line-height:8px;-webkit-text-stroke:0">élelmiszeripar online</span>
<span class="t" style="left:700.50px;top:98px;color:#000;letter-spacing:-0.438px;">&lt;</span>
<span class="t" style="left:941.50px;top:98px;color:#000;letter-spacing:-0.438px;">&gt;</span>
<span class="t" style="left:1005.50px;top:98px;color:#000;letter-spacing:-0.279px;">Frissít</span>
<span class="t" style="left:803.50px;top:121px;color:#000;letter-spacing:-0.259px;">Rakodás indítás</span>
<span class="t" style="left:901.00px;top:121px;color:#000;letter-spacing:-0.054px;">Terv.vissza</span>
<span class="t" style="left:998.00px;top:121px;color:#000;letter-spacing:-0.070px;">Stornó</span>
<span class="t" style="left:820.00px;top:144px;color:#000;letter-spacing:-0.121px;">Készültségre bont</span>
<span class="t" style="left:968.50px;top:144px;color:#000;letter-spacing:-0.033px;">Átszervez</span>
<span class="t" style="left:847.00px;top:167px;color:#000;letter-spacing:-0.172px;">-1 Nap</span>
<span class="t" style="left:974.50px;top:167px;color:#000;letter-spacing:0.036px;">+1 Nap</span>
<span class="t" style="left:818.50px;top:190px;color:#000;letter-spacing:-0.268px;">Vevői megrendelés</span>
<span class="t" style="left:958.00px;top:190px;color:#000;letter-spacing:-0.224px;">Túra összesítő</span>
<span class="t" style="left:864.00px;top:393px;color:#000;letter-spacing:-0.163px;">Szállítólevelek nyomtatása</span>
<span class="t" style="left:861.00px;top:416px;color:#000;letter-spacing:-0.243px;">Szállítólevelek megtekintése</span>
<span class="t" style="left:356.00px;top:612px;color:#000;letter-spacing:-0.272px;">Mentés mindenkinek</span>
<span class="t" style="left:1165.50px;top:87px;color:#000;letter-spacing:-0.016px;">Saját</span>
<span class="t" style="left:1148.00px;top:117px;color:#000;letter-spacing:-0.048px;">Törzsadatok</span>
<span class="t" style="left:1116.50px;top:516px;color:#000;letter-spacing:-0.148px;">Kereskedelmi törzsadatok</span>
<span class="t" style="left:1125.50px;top:546px;color:#000;letter-spacing:-0.253px;">Megrendelés - Számla</span>
<span class="t" style="left:1157.00px;top:576px;color:#000;letter-spacing:-0.116px;">Pénzügy</span>
</div>
</body></html>
